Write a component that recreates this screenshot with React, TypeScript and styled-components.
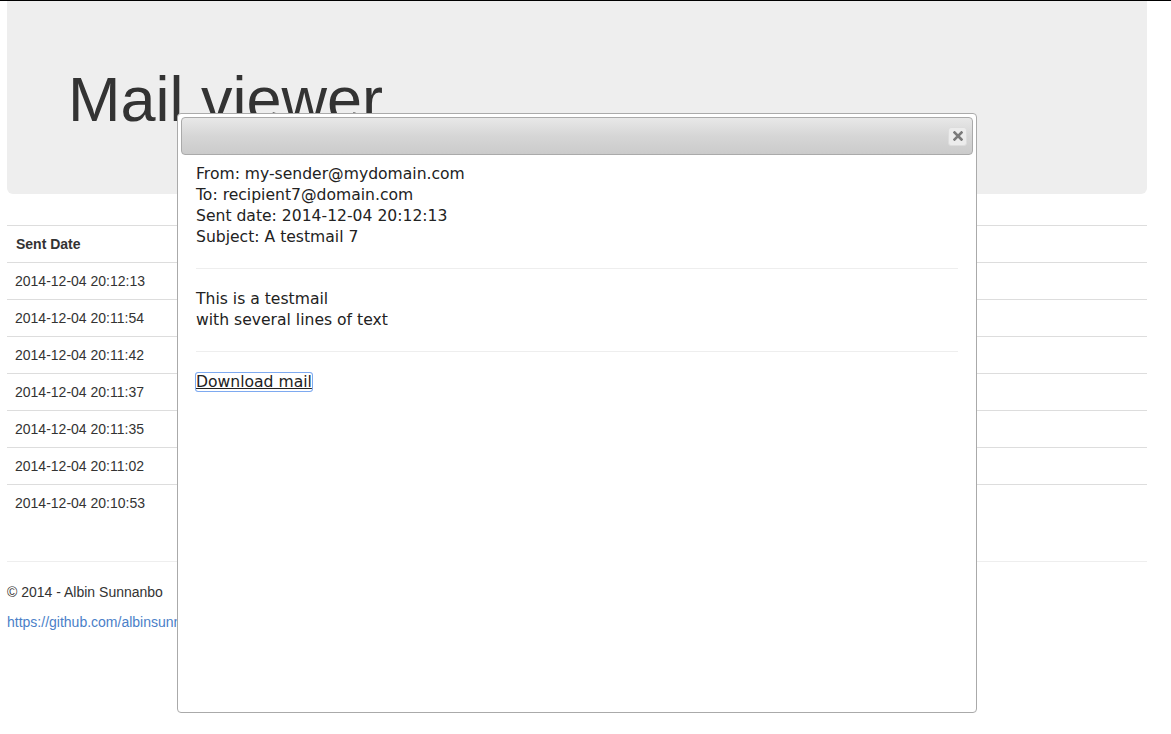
import React from 'react'
import styled, { createGlobalStyle } from 'styled-components'

const sentDates = [
    '2014-12-04 20:12:13',
    '2014-12-04 20:11:54',
    '2014-12-04 20:11:42',
    '2014-12-04 20:11:37',
    '2014-12-04 20:11:35',
    '2014-12-04 20:11:02',
    '2014-12-04 20:10:53',
]

const App: React.FC = () => {
    return (
        <Page>
            <GlobalStyle />
            <Container>
                <Jumbotron>
                    <Title>Mail viewer</Title>
                </Jumbotron>
                <MailTable>
                    <thead>
                        <tr>
                            <Th>Sent Date</Th>
                        </tr>
                    </thead>
                    <tbody>
                        {sentDates.map((d) => (
                            <tr key={d}>
                                <Td>{d}</Td>
                            </tr>
                        ))}
                    </tbody>
                </MailTable>
                <FooterRule />
                <Footer>
                    <p>© 2014 - Albin Sunnanbo</p>
                    <p>
                        <FooterLink href="#">https://github.com/albinsunn</FooterLink>
                    </p>
                </Footer>
            </Container>

            <Dialog>
                <TitleBar>
                    <CloseButton title="close">
                        <svg width="10" height="10" viewBox="0 0 10 10">
                            <path
                                d="M1.5 1.5 L8.5 8.5 M8.5 1.5 L1.5 8.5"
                                stroke="#7a7a7a"
                                strokeWidth="2.6"
                                strokeLinecap="square"
                            />
                        </svg>
                    </CloseButton>
                </TitleBar>
                <DialogContent>
                    <div>From: my-sender@mydomain.com</div>
                    <div>To: recipient7@domain.com</div>
                    <div>Sent date: 2014-12-04 20:12:13</div>
                    <div>Subject: A testmail 7</div>
                    <Rule />
                    <div>This is a testmail</div>
                    <div>with several lines of text</div>
                    <Rule />
                    <DownloadLink href="#">Download mail</DownloadLink>
                </DialogContent>
            </Dialog>
        </Page>
    )
}

export default App

const GlobalStyle = createGlobalStyle`
    html, body {
        margin: 0;
        padding: 0;
        background: #fff;
    }
    body {
        font-family: "Liberation Sans", Arial, Helvetica, sans-serif;
        font-size: 14px;
        line-height: 20px;
        color: #333;
    }
`

const Page = styled.div`
    position: relative;
    min-height: 734px;
    border-top: 1px solid #000;
`

const Container = styled.div`
    width: 1140px;
    margin-left: 7px;
`

const Jumbotron = styled.div`
    background: #eee;
    border-radius: 0 0 6px 6px;
    padding: 48px 60px;
    height: 193px;
    box-sizing: border-box;
    margin-bottom: 31px;
`

const Title = styled.h1`
    margin: 16px 0 0 1px;
    font-size: 63px;
    line-height: 69px;
    font-weight: 500;
    color: #333;
`

const MailTable = styled.table`
    width: 100%;
    border-collapse: collapse;
    border-spacing: 0;
`

const Th = styled.th`
    text-align: left;
    font-weight: bold;
    padding: 8px 8px 8px 9px;
    line-height: 20px;
    border-top: 1px solid #ddd;
    border-bottom: 1px solid #ddd;
`

const Td = styled.td`
    padding: 8px;
    line-height: 20px;
    border-top: 1px solid #ddd;
    white-space: nowrap;
`

const FooterRule = styled.hr`
    margin: 40px 0 20px;
    border: 0;
    border-top: 1px solid #eee;
`

const Footer = styled.footer`
    p {
        margin: 0 0 10px;
    }
`

const FooterLink = styled.a`
    color: #4a80c8;
    text-decoration: none;
`

const Dialog = styled.div`
    position: absolute;
    left: 177px;
    top: 112px;
    width: 800px;
    height: 600px;
    box-sizing: border-box;
    border: 1px solid #aaa;
    border-radius: 4px;
    background: #fff;
    padding: 3px;
    font-family: "DejaVu Sans", Verdana, sans-serif;
    color: #222;
`

const TitleBar = styled.div`
    height: 38px;
    box-sizing: border-box;
    border: 1px solid #aaa;
    border-radius: 4px;
    background: linear-gradient(to bottom, #e8e8e8 0%, #d6d6d6 50%, #cbcbcb 100%);
    display: flex;
    align-items: center;
    justify-content: flex-end;
    padding-right: 5px;
`

const CloseButton = styled.button`
    width: 19px;
    height: 19px;
    padding: 0;
    border: 1px solid #ddd;
    border-radius: 3px;
    background: #ececec;
    display: flex;
    align-items: center;
    justify-content: center;
    cursor: pointer;
`

const DialogContent = styled.div`
    padding: 9px 15px 8px;
    font-size: 15.6px;
    line-height: 21px;
`

const Rule = styled.hr`
    margin: 20px 0;
    border: 0;
    border-top: 1px solid #eee;
`

const DownloadLink = styled.a`
    color: #222;
    text-decoration: underline;
    outline: 1px solid #7eaaf0;
    box-shadow: 0 0 0 1px rgba(126, 170, 240, 0.4);
    border-radius: 2px;
`
